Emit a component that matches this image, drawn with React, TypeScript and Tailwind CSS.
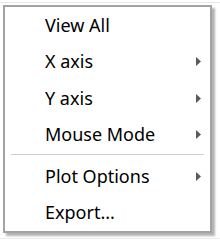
import React from 'react'

interface MenuItem {
  label: string
  submenu?: boolean
  separatorBefore?: boolean
}

const items: MenuItem[] = [
  { label: 'View All' },
  { label: 'X axis', submenu: true },
  { label: 'Y axis', submenu: true },
  { label: 'Mouse Mode', submenu: true },
  { label: 'Plot Options', submenu: true, separatorBefore: true },
  { label: 'Export...' },
]

function Arrow() {
  return (
    <svg width="5" height="9" viewBox="0 0 5 9" className="shrink-0">
      <path d="M0 0 L5 4.5 L0 9 Z" fill="#5a5a5a" />
    </svg>
  )
}

export default function App() {
  return (
    <div
      className="relative w-[220px] h-[244px] bg-white overflow-hidden"
      style={{ fontFamily: '"Noto Sans", "Open Sans", sans-serif' }}
    >
      {/* faint plot grid behind the menu */}
      <div className="absolute left-0 right-0 top-[2px] h-px bg-[#e6e6e6]" />
      <div className="absolute left-0 right-0 top-[238px] h-px bg-[#ececec]" />

      <div className="relative ml-[3px] mt-[5px] w-[209px] h-[228px] bg-white border-2 border-[#a3a3a3] shadow-[3px_3px_2px_rgba(0,0,0,0.3)] flex flex-col">
        {items.map((item) => (
          <React.Fragment key={item.label}>
            {item.separatorBefore && (
              <div className="mx-[6px] mt-[1px] mb-[3px] h-px bg-[#cfcfcf]" />
            )}
            <div className="flex items-center h-[37px] pl-[40px] pr-[9px] text-[18px] text-black">
              <span className="flex-1">{item.label}</span>
              {item.submenu && <Arrow />}
            </div>
          </React.Fragment>
        ))}
      </div>
    </div>
  )
}
